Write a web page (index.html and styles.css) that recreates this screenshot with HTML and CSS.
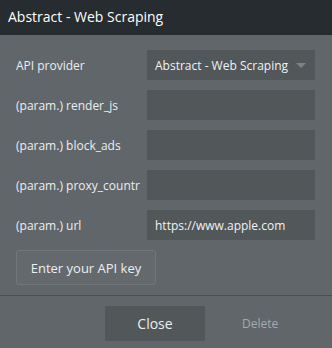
FILE: index.html
```html
<!DOCTYPE html>
<html lang="en">
<head>
    <meta charset="UTF-8">
    <title>Abstract - Web Scraping</title>
    <link rel="stylesheet" href="styles.css">
</head>
<body>
    <div class="dialog">
        <div class="dialog-header">Abstract - Web Scraping</div>

        <div class="dialog-body">
            <div class="row">
                <span class="label">API provider</span>
                <div class="select">
                    <span>Abstract - Web Scraping</span>
                    <span class="caret"></span>
                </div>
            </div>
            <div class="row">
                <span class="label">(param.) render_js</span>
                <div class="field"></div>
            </div>
            <div class="row">
                <span class="label">(param.) block_ads</span>
                <div class="field"></div>
            </div>
            <div class="row">
                <span class="label">(param.) proxy_countr</span>
                <div class="field"></div>
            </div>
            <div class="row">
                <span class="label">(param.) url</span>
                <div class="field">https://www.apple.com</div>
            </div>

            <button class="key-btn">Enter your API key</button>
        </div>

        <div class="dialog-footer">
            <button class="close-btn">Close</button>
            <span class="delete">Delete</span>
        </div>
    </div>
</body>
</html>
```

FILE: styles.css
```css
body {
    margin: 0;
    padding: 0;
    background: #60666a;
    font-family: "Open Sans", "Liberation Sans", sans-serif;
    color: #e8eaeb;
}

.dialog {
    width: 332px;
    height: 348px;
    background: #60666a;
}

.dialog-header {
    height: 35px;
    box-sizing: border-box;
    padding: 7px 8px 0;
    background: #262c2f;
    color: #ffffff;
    font-size: 14px;
}

.dialog-body {
    padding: 15px 17px 10px 16px;
    border-bottom: 1px solid #4b5054;
}

.row {
    display: flex;
    align-items: center;
    justify-content: space-between;
    height: 30px;
    margin-bottom: 10px;
    font-size: 12px;
}

.label {
    color: #eceeef;
}

.select, .field {
    width: 168px;
    height: 30px;
    box-sizing: border-box;
    padding: 0 8px;
    display: flex;
    align-items: center;
    background: #52575a;
    color: #f0f2f3;
    font-size: 12px;
}

.select {
    justify-content: space-between;
}

.caret {
    width: 0;
    height: 0;
    border-left: 5px solid transparent;
    border-right: 5px solid transparent;
    border-top: 5px solid #7d8286;
    margin-right: 1px;
}

.key-btn {
    display: block;
    width: 140px;
    height: 35px;
    background: #64696d;
    border: 1px solid #71767a;
    border-radius: 2px;
    color: #eceeef;
    font-family: inherit;
    font-size: 13px;
    padding: 0;
}

.dialog-footer {
    display: flex;
    align-items: center;
    padding: 10px 0 0 105px;
}

.close-btn {
    width: 100px;
    height: 35px;
    background: #52575a;
    border: none;
    color: #eceeef;
    font-family: inherit;
    font-size: 14px;
    padding: 0;
}

.delete {
    margin-left: 37px;
    color: #a6aaad;
    font-size: 12px;
}
```
